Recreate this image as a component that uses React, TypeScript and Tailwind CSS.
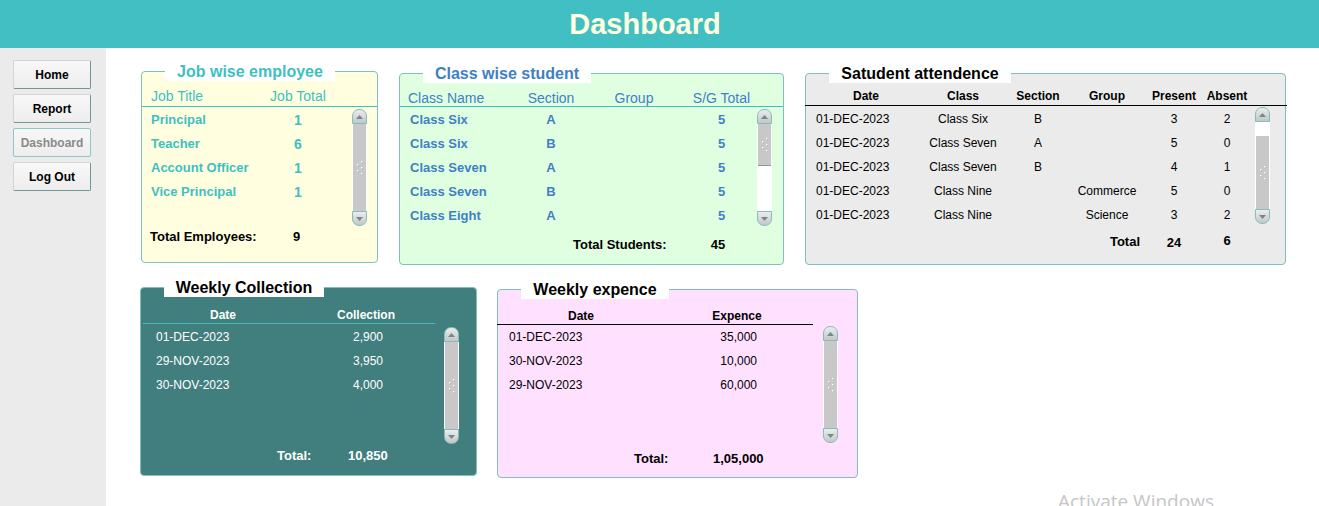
import type { ReactNode } from "react";

const jobs = [
  ["Principal", "1"],
  ["Teacher", "6"],
  ["Account Officer", "1"],
  ["Vice Principal", "1"],
];

const classes = [
  ["Class Six", "A", "5"],
  ["Class Six", "B", "5"],
  ["Class Seven", "A", "5"],
  ["Class Seven", "B", "5"],
  ["Class Eight", "A", "5"],
];

const attendance = [
  ["01-DEC-2023", "Class Six", "B", "", "3", "2"],
  ["01-DEC-2023", "Class Seven", "A", "", "5", "0"],
  ["01-DEC-2023", "Class Seven", "B", "", "4", "1"],
  ["01-DEC-2023", "Class Nine", "", "Commerce", "5", "0"],
  ["01-DEC-2023", "Class Nine", "", "Science", "3", "2"],
];

const collection = [
  ["01-DEC-2023", "2,900"],
  ["29-NOV-2023", "3,950"],
  ["30-NOV-2023", "4,000"],
];

const expence = [
  ["01-DEC-2023", "35,000"],
  ["30-NOV-2023", "10,000"],
  ["29-NOV-2023", "60,000"],
];

function Arrow({ down }: { down?: boolean }) {
  return (
    <div
      className={`flex h-[15px] w-[15px] items-center justify-center border border-[#7fbfbf] bg-linear-to-b from-[#ececec] to-[#c6c6c6] ${
        down ? "rounded-b-[7px]" : "rounded-t-[7px]"
      }`}
    >
      <svg width="7" height="4" viewBox="0 0 7 4">
        <polygon points={down ? "0,0 7,0 3.5,4" : "0,4 7,4 3.5,0"} fill="#6f8c8c" />
      </svg>
    </div>
  );
}

function Grip() {
  const dots = [
    [4, 0],
    [0, 3],
    [4, 6],
    [0, 9],
    [4, 12],
  ];
  return (
    <svg width="6" height="14" viewBox="0 0 6 14">
      {dots.map(([x, y], i) => (
        <g key={i}>
          <rect x={x + 0.6} y={y + 0.6} width="1.5" height="1.5" fill="#7fa9a9" />
          <rect x={x} y={y} width="1.5" height="1.5" fill="#ffffff" />
        </g>
      ))}
    </svg>
  );
}

// variant: full thumb, short thumb at top, or a white gap above the thumb
function ScrollBar({ variant = "full", className = "" }: { variant?: "full" | "short" | "gap"; className?: string }) {
  return (
    <div className={`flex h-[117px] w-[15px] shrink-0 flex-col ${className}`}>
      <Arrow />
      <div className="flex flex-1 flex-col border-x border-white bg-white">
        {variant === "gap" && <div className="h-[14px]" />}
        <div
          className={`flex items-center justify-center bg-[#c8c8c8] ${
            variant === "short" ? "h-[42px] border-b border-[#7f9f9f]" : "flex-1"
          }`}
        >
          <Grip />
        </div>
      </div>
      <Arrow down />
    </div>
  );
}

function Panel({
  title,
  labelClass,
  className,
  children,
}: {
  title: string;
  labelClass: string;
  className: string;
  children: ReactNode;
}) {
  return (
    <div className={`relative shrink-0 rounded-[4px] border border-[#7fbfbf] ${className}`}>
      <div
        className={`absolute -top-[10px] left-[23px] flex h-[19px] items-center justify-center whitespace-nowrap bg-white text-[16px] font-bold leading-none ${labelClass}`}
      >
        {title}
      </div>
      {children}
    </div>
  );
}

function SideButton({ label, active }: { label: string; active?: boolean }) {
  return (
    <div
      className={`flex h-[29px] w-[78px] items-center justify-center rounded-[2px] border bg-linear-to-b from-[#f8f8f8] to-[#ededed] text-[12px] font-bold ${
        active
          ? "border-[#8cc8c8] text-[#8a8a8a]"
          : "border-[#d4d4d4] border-r-[#6f9797] border-b-[#6f9797] text-black"
      }`}
    >
      {label}
    </div>
  );
}

export default function App() {
  return (
    <div className="relative flex h-[506px] w-[1319px] flex-col overflow-hidden bg-white font-['Liberation_Sans',Arial,sans-serif]">
      <header className="flex h-[48px] shrink-0 items-center justify-center bg-[#41bfc2] pr-[29px]">
        <h1 className="text-[29px] font-bold leading-none text-[#ffffe0]">Dashboard</h1>
      </header>

      <div className="flex flex-1">
        <aside className="flex w-[106px] shrink-0 flex-col gap-[5px] bg-[#ebebeb] pl-[13px] pt-[12px]">
          <SideButton label="Home" />
          <SideButton label="Report" />
          <SideButton label="Dashboard" active />
          <SideButton label="Log Out" />
        </aside>

        <main className="flex-1 pl-[35px] pt-[23px]">
          <div className="flex items-start gap-[21px]">
            {/* Job wise employee */}
            <Panel title="Job wise employee" labelClass="w-[170px] text-[#40bfc1]" className="h-[192px] w-[237px] bg-[#ffffe0]">
              <div className="grid h-[35px] grid-cols-[128px_56px] items-end border-b border-[#40bfc1] pb-[2px] text-[14px] leading-4 text-[#40bfc1]">
                <div className="pl-[9px]">Job Title</div>
                <div className="flex justify-center whitespace-nowrap">Job Total</div>
              </div>
              <div className="flex">
                <div className="w-[210px]">
                  {jobs.map(([t, n]) => (
                    <div key={t} className="grid h-[24px] grid-cols-[128px_56px] items-center pt-[2px] text-[13px] font-bold text-[#40bfc1]">
                      <div className="whitespace-nowrap pl-[9px]">{t}</div>
                      <div className="flex justify-center text-[14px]">{n}</div>
                    </div>
                  ))}
                </div>
                <ScrollBar className="mt-[2px]" />
              </div>
              <div className="mt-[2px] flex h-[17px] items-center text-[13px] font-bold text-black">
                <div className="w-[128px] whitespace-nowrap pl-[8px]">Total Employees:</div>
                <div className="flex w-[53px] justify-center">9</div>
              </div>
            </Panel>

            {/* Class wise student */}
            <Panel title="Class wise student" labelClass="w-[168px] text-[#3f7fc6]" className="mt-[2px] h-[192px] w-[385px] bg-[#e0ffe0]">
              <div className="grid h-[33px] grid-cols-[120px_62px_104px_71px] items-end border-b border-[#40bfc1] text-[14px] leading-4 text-[#3f7fc6]">
                <div className="whitespace-nowrap pl-[8px]">Class Name</div>
                <div className="flex justify-center">Section</div>
                <div className="flex justify-center">Group</div>
                <div className="flex justify-center whitespace-nowrap">S/G Total</div>
              </div>
              <div className="flex">
                <div className="w-[357px]">
                  {classes.map(([c, s, n], i) => (
                    <div key={i} className="grid h-[24px] grid-cols-[120px_62px_104px_71px] items-center pt-[2px] text-[13px] font-bold text-[#3f7fc6]">
                      <div className="whitespace-nowrap pl-[10px]">{c}</div>
                      <div className="flex justify-center">{s}</div>
                      <div />
                      <div className="flex justify-center">{n}</div>
                    </div>
                  ))}
                </div>
                <ScrollBar variant="short" className="mt-[2px]" />
              </div>
              <div className="mt-[9px] flex h-[18px] items-center text-[13px] font-bold text-black">
                <div className="ml-[173px] w-[110px] whitespace-nowrap">Total Students:</div>
                <div className="flex w-[70px] justify-center">45</div>
              </div>
            </Panel>

            {/* Student attendance */}
            <Panel title="Satudent attendence" labelClass="w-[182px] text-black" className="mt-[2px] h-[192px] w-[481px] bg-[#ebebeb]">
              <div className="grid h-[31px] grid-cols-[120px_74px_76px_62px_72px_34px] items-end pb-[2px] text-[12px] font-bold leading-[14px] text-black">
                <div className="flex justify-center">Date</div>
                <div className="flex justify-center">Class</div>
                <div className="flex justify-center">Section</div>
                <div className="flex justify-center">Group</div>
                <div className="flex justify-center">Present</div>
                <div className="flex justify-center">Absent</div>
              </div>
              <div className="-ml-px h-px w-[482px] bg-black" />
              <div className="flex">
                <div className="w-[449px]">
                  {attendance.map((r, i) => (
                    <div key={i} className="grid h-[24px] grid-cols-[120px_74px_76px_62px_72px_34px] items-center pt-[2px] text-[12px] text-black">
                      <div className="pl-[10px]">{r[0]}</div>
                      <div className="flex justify-center whitespace-nowrap">{r[1]}</div>
                      <div className="flex justify-center">{r[2]}</div>
                      <div className="flex justify-center">{r[3]}</div>
                      <div className="flex justify-center">{r[4]}</div>
                      <div className="flex justify-center">{r[5]}</div>
                    </div>
                  ))}
                </div>
                <ScrollBar variant="gap" className="mt-[1px]" />
              </div>
              <div className="mt-[5px] grid h-[18px] grid-cols-[120px_74px_76px_62px_72px_34px] items-center text-[13px] font-bold text-black">
                <div />
                <div />
                <div />
                <div className="-mr-[2px] flex justify-end">Total</div>
                <div className="flex justify-center pt-[2px]">24</div>
                <div className="flex justify-center pb-[2px]">6</div>
              </div>
            </Panel>
          </div>

          <div className="mt-[22px] -ml-px flex items-start gap-[20px]">
            {/* Weekly Collection */}
            <Panel title="Weekly Collection" labelClass="w-[160px] text-black" className="h-[189px] w-[337px] bg-[#417e7e]">
              <div className="grid h-[35px] grid-cols-[164px_122px] items-end pb-[1px] text-[12px] font-bold leading-[14px] text-white">
                <div className="flex justify-center">Date</div>
                <div className="flex justify-center">Collection</div>
              </div>
              <div className="ml-[2px] h-px w-[292px] bg-[#40bfc1]" />
              <div className="flex">
                <div className="w-[303px]">
                  {collection.map(([d, v]) => (
                    <div key={d} className="grid h-[24px] grid-cols-[170px_72px] items-center pt-[2px] text-[12px] text-white">
                      <div className="pl-[15px]">{d}</div>
                      <div className="text-right">{v}</div>
                    </div>
                  ))}
                </div>
                <ScrollBar className="mt-[3px]" />
              </div>
              <div className="mt-[3px] flex h-[18px] items-center text-[13px] font-bold text-white">
                <div className="ml-[136px] w-[71px]">Total:</div>
                <div>10,850</div>
              </div>
            </Panel>

            {/* Weekly expence */}
            <Panel title="Weekly expence" labelClass="w-[148px] text-black" className="mt-[2px] h-[189px] w-[361px] bg-[#ffe0ff]">
              <div className="grid h-[34px] grid-cols-[166px_146px] items-end pb-[1px] text-[12px] font-bold leading-[14px] text-black">
                <div className="flex justify-center">Date</div>
                <div className="flex justify-center">Expence</div>
              </div>
              <div className="-ml-px h-px w-[316px] bg-black" />
              <div className="flex">
                <div className="w-[325px]">
                  {expence.map(([d, v]) => (
                    <div key={d} className="grid h-[24px] grid-cols-[180px_79px] items-center text-[12px] text-black">
                      <div className="pl-[11px]">{d}</div>
                      <div className="text-right">{v}</div>
                    </div>
                  ))}
                </div>
                <ScrollBar className="mt-[1px]" />
              </div>
              <div className="mt-[7px] flex h-[18px] items-center text-[13px] font-bold text-black">
                <div className="ml-[136px] w-[79px]">Total:</div>
                <div>1,05,000</div>
              </div>
            </Panel>
          </div>
        </main>
      </div>

      <div className="absolute left-[1058px] top-[492px] whitespace-nowrap font-['Open_Sans',sans-serif] text-[19px] leading-none text-[#c6c6c6]">
        Activate Windows
      </div>
    </div>
  );
}
